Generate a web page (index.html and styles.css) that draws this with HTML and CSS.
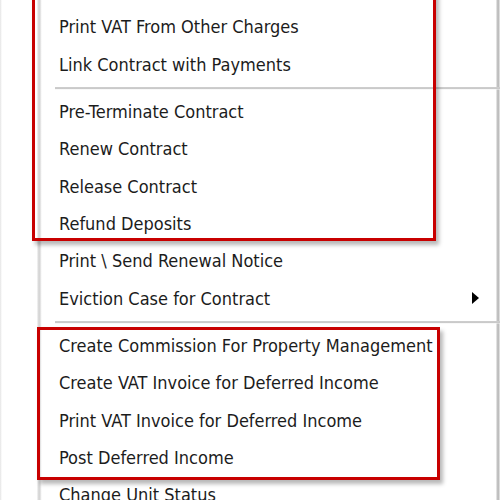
FILE: index.html
```html
<!DOCTYPE html>
<html>
<head>
<meta charset="utf-8">
<link rel="stylesheet" href="styles.css">
</head>
<body>
<div class="menu">
  <ul class="items">
    <li class="item">Print VAT From Other Charges</li>
    <li class="item">Link Contract with Payments</li>
    <li class="sep"></li>
    <li class="item">Pre-Terminate Contract</li>
    <li class="item">Renew Contract</li>
    <li class="item">Release Contract</li>
    <li class="item">Refund Deposits</li>
    <li class="item">Print \ Send Renewal Notice</li>
    <li class="item has-sub">Eviction Case for Contract<span class="arrow"></span></li>
    <li class="sep"></li>
    <li class="item">Create Commission For Property Management</li>
    <li class="item">Create VAT Invoice for Deferred Income</li>
    <li class="item">Print VAT Invoice for Deferred Income</li>
    <li class="item">Post Deferred Income</li>
    <li class="item">Change Unit Status</li>
  </ul>
  <div class="highlight box-one"></div>
  <div class="highlight box-two"></div>
</div>
</body>
</html>
```

FILE: styles.css
```css
html, body {
  margin: 0;
  padding: 0;
  background: #ffffff;
  overflow: hidden;
}

.menu {
  position: relative;
  width: 500px;
  height: 500px;
  overflow: hidden;
  background:
    linear-gradient(to right,
      #e4e4e4 0px, #ffffff 2px,
      #ffffff 37px, #dcdcdc 38px, #d4d4d4 40px, #f4f4f4 41px, #ffffff 42px,
      #ffffff 496px, #c4c4c4 497px, #bcbcbc 499px, #ffffff 500px);
  font-family: "DejaVu Sans Condensed", "Liberation Sans", sans-serif;
  font-stretch: condensed;
  font-size: 18px;
  color: #1c1c1c;
}

.items {
  list-style: none;
  margin: 0;
  padding: 8.33px 0 0 0;
}

.item {
  display: flex;
  align-items: center;
  height: 37.33px;
  padding-left: 59px;
  white-space: nowrap;
}

.has-sub {
  justify-content: space-between;
  padding-right: 21px;
}

.arrow {
  width: 0;
  height: 0;
  border-top: 6px solid transparent;
  border-bottom: 6px solid transparent;
  border-left: 7px solid #000000;
}

.sep {
  height: 10px;
  margin-left: 55px;
  background: linear-gradient(to bottom,
    transparent 4px, #cfcfcf 4px, #c8c8c8 6px, #f2f2f2 6px, transparent 7px);
}

.highlight {
  position: absolute;
  border: 3px solid #c80000;
  box-shadow: 3px 4px 4px rgba(0, 0, 0, 0.28);
  pointer-events: none;
}

.box-one {
  left: 32px;
  top: -10px;
  width: 398px;
  height: 245px;
}

.box-two {
  left: 37px;
  top: 327px;
  width: 397px;
  height: 147px;
}
```
